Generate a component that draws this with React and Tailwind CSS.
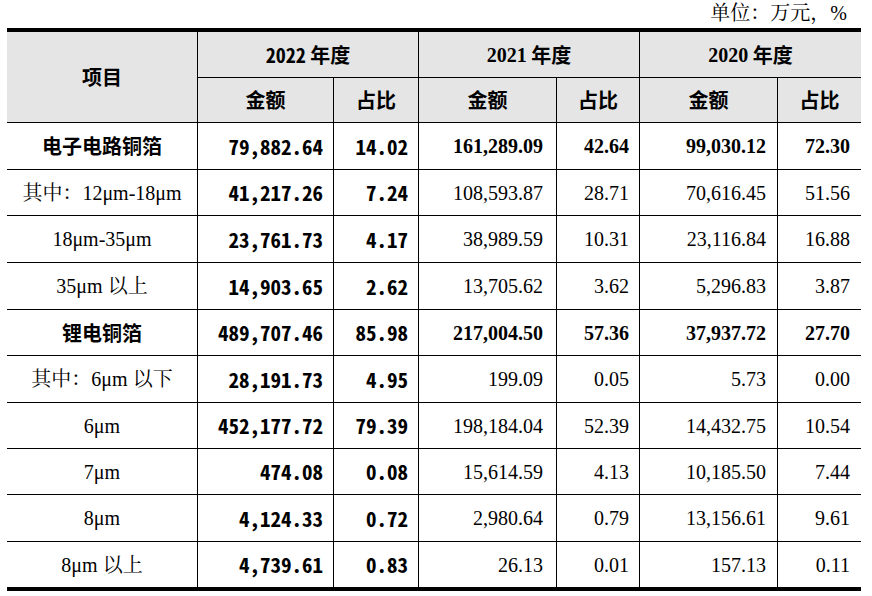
import React from "react";

const SERIF = "font-['Liberation_Serif','Noto_Serif_CJK_SC','Noto_Sans_CJK_SC',serif]";
const MONO = "font-['Noto_Sans_Mono_CJK_SC','DejaVu_Sans_Mono','Noto_Sans_CJK_SC',monospace]";
const HEI = "font-['Noto_Sans_CJK_SC',sans-serif]";

const rows = [
  { label: "电子电路铜箔", bold: true, a: "79,882.64", b: "14.02", c: "161,289.09", d: "42.64", e: "99,030.12", f: "72.30", h: "h-[47px] border-b" },
  { label: "其中：12μm-18μm", a: "41,217.26", b: "7.24", c: "108,593.87", d: "28.71", e: "70,616.45", f: "51.56", h: "h-[46px] border-b" },
  { label: "18μm-35μm", a: "23,761.73", b: "4.17", c: "38,989.59", d: "10.31", e: "23,116.84", f: "16.88", h: "h-[47px] border-b" },
  { label: "35μm 以上", a: "14,903.65", b: "2.62", c: "13,705.62", d: "3.62", e: "5,296.83", f: "3.87", h: "h-[47px] border-b" },
  { label: "锂电铜箔", bold: true, a: "489,707.46", b: "85.98", c: "217,004.50", d: "57.36", e: "37,937.72", f: "27.70", h: "h-[46px] border-b" },
  { label: "其中：6μm 以下", a: "28,191.73", b: "4.95", c: "199.09", d: "0.05", e: "5.73", f: "0.00", h: "h-[47px] border-b" },
  { label: "6μm", a: "452,177.72", b: "79.39", c: "198,184.04", d: "52.39", e: "14,432.75", f: "10.54", h: "h-[46px] border-b" },
  { label: "7μm", a: "474.08", b: "0.08", c: "15,614.59", d: "4.13", e: "10,185.50", f: "7.44", h: "h-[46px] border-b" },
  { label: "8μm", a: "4,124.33", b: "0.72", c: "2,980.64", d: "0.79", e: "13,156.61", f: "9.61", h: "h-[47px] border-b" },
  { label: "8μm 以上", a: "4,739.61", b: "0.83", c: "26.13", d: "0.01", e: "157.13", f: "0.11", h: "h-[49px] border-b-4" },
];

function Row({ r }) {
  const sb = r.bold ? "font-bold" : "font-normal";
  return (
    <div className={`flex ${r.h} border-black`}>
      <div
        className={`w-[190px] flex items-center justify-center text-[20px] leading-none ${
          r.bold ? HEI + " font-bold" : SERIF
        }`}
      >
        {r.label}
      </div>
      <div className={`w-[136px] border-l border-black flex items-center justify-end pr-[10px] text-[21px] leading-none font-bold ${MONO}`}>
        {r.a}
      </div>
      <div className={`w-[85px] border-l border-black flex items-center justify-end pr-[10px] text-[21px] leading-none font-bold ${MONO}`}>
        {r.b}
      </div>
      <div className={`w-[138px] border-l border-black flex items-center justify-end pr-[13px] text-[20px] leading-none ${SERIF} ${sb}`}>
        {r.c}
      </div>
      <div className={`w-[83px] border-l border-black flex items-center justify-end pr-[10px] text-[20px] leading-none ${SERIF} ${sb}`}>
        {r.d}
      </div>
      <div className={`w-[138px] border-l border-black flex items-center justify-end pr-[11px] text-[20px] leading-none ${SERIF} ${sb}`}>
        {r.e}
      </div>
      <div className={`w-[84px] border-l border-black flex items-center justify-end pr-[11px] text-[20px] leading-none ${SERIF} ${sb}`}>
        {r.f}
      </div>
    </div>
  );
}

function Group({ year, mono, w, amtW }) {
  return (
    <div className={`${w} border-l border-black flex flex-col`}>
      <div className="h-[46px] border-b border-black flex items-center justify-center text-[20px] leading-none font-bold">
        <span className={mono ? MONO : SERIF}>{year}</span>
        <span className={HEI}>&nbsp;年度</span>
      </div>
      <div className="h-[44px] flex">
        <div className={`${amtW} flex items-center justify-center text-[20px] leading-none font-bold ${HEI}`}>金额</div>
        <div className={`flex-1 border-l border-black flex items-center justify-center text-[20px] leading-none font-bold ${HEI}`}>
          占比
        </div>
      </div>
    </div>
  );
}

export default function App() {
  return (
    <div className="w-[872px] h-[596px] bg-white text-black overflow-hidden">
      <div className="ml-[7px] w-[854px]">
        <div className={`h-[28px] pb-[3px] flex items-center justify-end pr-[14px] text-[20px] leading-none ${SERIF}`}>
          单位：万元，%
        </div>
        <div className="h-[95px] border-t-4 border-b border-black bg-[#e5e5e5] flex">
          <div className={`w-[190px] flex items-center justify-center text-[20px] leading-none font-bold ${HEI}`}>项目</div>
          <Group year="2022" mono w="w-[221px]" amtW="w-[135px]" />
          <Group year="2021" w="w-[221px]" amtW="w-[137px]" />
          <Group year="2020" w="w-[222px]" amtW="w-[137px]" />
        </div>
        {rows.map((r, i) => (
          <Row key={i} r={r} />
        ))}
      </div>
    </div>
  );
}
